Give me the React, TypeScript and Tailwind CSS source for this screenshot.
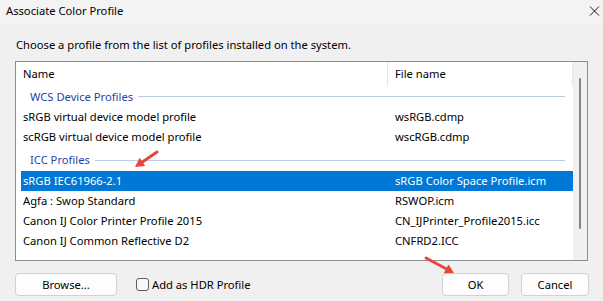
const items1 = [
  { name: 'sRGB virtual device model profile', file: 'wsRGB.cdmp' },
  { name: 'scRGB virtual device model profile', file: 'wscRGB.cdmp' },
];

const items2 = [
  { name: 'sRGB IEC61966-2.1', file: 'sRGB Color Space Profile.icm', selected: true },
  { name: 'Agfa : Swop Standard', file: 'RSWOP.icm' },
  { name: 'Canon IJ Color Printer Profile 2015', file: 'CN_IJPrinter_Profile2015.icc' },
  { name: 'Canon IJ Common Reflective D2', file: 'CNFRD2.ICC' },
];

type Item = { name: string; file: string; selected?: boolean };

const Row = ({ item }: { item: Item }) => (
  <div
    className={
      'ml-[5px] w-[552px] h-[20px] flex items-center ' +
      (item.selected ? 'bg-[#0078d7] text-white' : 'text-black')
    }
  >
    <div className="w-[372px] pl-[2px] whitespace-nowrap">{item.name}</div>
    <div className="pl-[2px] whitespace-nowrap">{item.file}</div>
  </div>
);

const Group = ({ label, className }: { label: string; className: string }) => (
  <div className={'ml-[5px] w-[544px] flex items-center pl-[9px] ' + className}>
    <span className="text-[#1f3faa] whitespace-nowrap">{label}</span>
    <div className="flex-1 ml-[5px] h-px bg-[#bccbe8]" />
  </div>
);

const App = () => {
  return (
    <div className="relative w-[603px] h-[301px] bg-[#f0f0f0] flex flex-col text-[11.2px] leading-[16px] text-black font-['Noto_Sans',sans-serif] overflow-hidden">
      <div className="h-[24px] flex items-center justify-between pl-[6px] pr-[4px] bg-[#f3f3f3]">
        <span className="-mt-[2px]">Associate Color Profile</span>
      </div>

      <div className="flex flex-col px-[15px] pt-[13px]">
        <div className="pl-[1px] h-[16px]">Choose a profile from the list of profiles installed on the system.</div>

        <div className="mt-[8px] h-[200px] border border-[#8a8d93] bg-white flex">
          <div className="flex-1 flex flex-col">
            <div className="h-[24px] flex items-center">
              <div className="w-[371px] pl-[7px] -mt-[1px]">Name</div>
              <div className="w-px h-full bg-[#e5e5e5]" />
              <div className="w-[184px] pl-[7px] -mt-[1px]">File name</div>
              <div className="w-px h-full bg-[#e5e5e5]" />
            </div>
            <Group label="WCS Device Profiles" className="h-[21px]" />
            {items1.map((it) => (
              <Row key={it.name} item={it} />
            ))}
            <Group label="ICC Profiles" className="h-[24px] pt-[2px]" />
            {items2.map((it) => (
              <Row key={it.name} item={it} />
            ))}
          </div>
          <div className="w-[17px] bg-[#f0f0f0] flex justify-center pt-[16px]">
            <div className="w-[2px] h-[151px] bg-[#858585] rounded-full" />
          </div>
        </div>

        <div className="mt-[12px] h-[23px] flex items-center">
          <button className="w-[102px] h-[23px] rounded-[4px] border border-[#d1d1d1] bg-[#fdfdfd]">
            Browse...
          </button>
          <label className="ml-[19px] flex items-center">
            <span className="w-[13px] h-[13px] rounded-[3px] border border-[#5c5c5c] bg-[#f8f8f8]" />
            <span className="ml-[3px]">Add as HDR Profile</span>
          </label>
          <div className="flex-1" />
          <button className="w-[67px] h-[23px] rounded-[4px] border border-[#d1d1d1] bg-[#fdfdfd]">
            OK
          </button>
          <button className="ml-[12px] mr-[-1px] w-[68px] h-[23px] rounded-[4px] border border-[#d1d1d1] bg-[#fdfdfd]">
            Cancel
          </button>
        </div>
      </div>

      <svg className="absolute inset-0 pointer-events-none" width="603" height="301">
        <path d="M590 6.5 L599 15.5 M599 6.5 L590 15.5" stroke="#1a1a1a" strokeWidth="1" />
        <line x1="157" y1="152" x2="142.4" y2="161.9" stroke="#e8463b" strokeWidth="3" strokeLinecap="round" />
        <polygon points="135,167 145.2,166 139.6,157.8" fill="#e8463b" />
        <line x1="426" y1="258" x2="446.1" y2="268.8" stroke="#e8463b" strokeWidth="3" strokeLinecap="round" />
        <polygon points="454,273 443.7,273.2 448.5,264.4" fill="#e8463b" />
      </svg>
    </div>
  );
};

export default App;
